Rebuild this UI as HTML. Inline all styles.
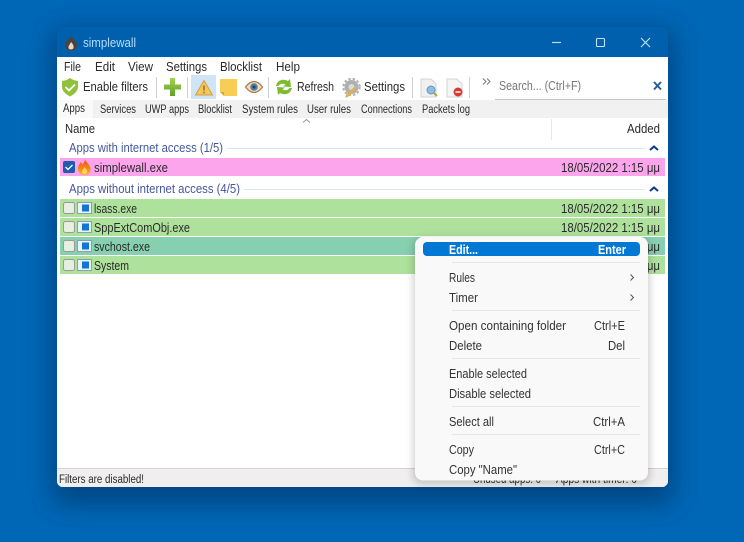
<!DOCTYPE html>
<html><head><meta charset="utf-8"><title>simplewall</title>
<style>
html,body{margin:0;padding:0;width:744px;height:542px;overflow:hidden;background:#0066b5}
svg{display:block}
text{font-family:"Liberation Sans",sans-serif;font-size:12.5px;fill:#2a2a2a}
.t{fill:#2a2a2a}
.g{fill:#44579c}
.m{fill:#333}
.s{font-size:11.5px}
</style></head><body>
<svg width="744" height="542" viewBox="0 0 744 542" xmlns="http://www.w3.org/2000/svg">
<defs>
<filter id="sh" x="-15%" y="-15%" width="130%" height="130%"><feGaussianBlur stdDeviation="13"/></filter>
<filter id="sh2" x="-10%" y="-10%" width="120%" height="120%"><feGaussianBlur stdDeviation="4"/></filter>
<linearGradient id="gr" x1="0" y1="0" x2="0" y2="1"><stop offset="0" stop-color="#a6d34a"/><stop offset="1" stop-color="#5f9e2a"/></linearGradient>
<linearGradient id="fl" x1="0" y1="0" x2="0" y2="1"><stop offset="0" stop-color="#f04a14"/><stop offset="1" stop-color="#ffb020"/></linearGradient>
</defs>
<rect width="744" height="542" fill="#0067b6"/>
<rect x="52" y="30" width="622" height="474" rx="10" fill="#003a72" opacity=".75" filter="url(#sh)"/>
<!-- title bar -->
<path d="M57 57V33a6 6 0 0 1 6-6H662a6 6 0 0 1 6 6V57Z" fill="#0060ae"/>
<path d="M71 35c1 3 5 5 6 9 .5 4-2.500 7-6 7s-6.500-3-6-7c.5-3 3-4 3-6 1 1 1.500 1 2 1 .5-1 1-2 1-4Z" fill="#4a4440"/>
<path d="M71 42c2 2 3 4 2.500 6-.5 2-4.500 2-5 0-.5-2 1.500-3.500 2.500-6Z" fill="#e8d8c8"/>
<text x="83" y="47" textLength="53" lengthAdjust="spacingAndGlyphs" style="fill:#b4defa">simplewall</text>
<path d="M552 42.500H561" stroke="#b4defa" stroke-width="1.200"/>
<rect x="596.500" y="38.500" width="8" height="8" rx="1" fill="none" stroke="#c3e3f8" stroke-width="1.100"/>
<path d="M641 38L650 47M650 38L641 47" stroke="#c3e3f8" stroke-width="1.100"/>
<!-- client -->
<path d="M57 57H668V481a6 6 0 0 1-6 6H63a6 6 0 0 1-6-6Z" fill="#fff"/>
<!-- menu -->
<text class="t" x="64" y="71" textLength="17" lengthAdjust="spacingAndGlyphs">File</text>
<text class="t" x="95" y="71" textLength="20" lengthAdjust="spacingAndGlyphs">Edit</text>
<text class="t" x="128" y="71" textLength="25" lengthAdjust="spacingAndGlyphs">View</text>
<text class="t" x="166" y="71" textLength="41" lengthAdjust="spacingAndGlyphs">Settings</text>
<text class="t" x="220" y="71" textLength="42" lengthAdjust="spacingAndGlyphs">Blocklist</text>
<text class="t" x="276" y="71" textLength="24" lengthAdjust="spacingAndGlyphs">Help</text>
<!-- toolbar -->
<path d="M70 78c3 2 5 2.500 8 3v6c0 4-4 7.500-8 9.500-4-2-8-5.500-8-9.500v-6c3-.5 5-1 8-3Z" fill="#8fc23a"/>
<path d="M65.500 87l3.500 3.500 6-6" fill="none" stroke="#fff" stroke-width="1.800"/>
<text class="t" x="83" y="91" textLength="65" lengthAdjust="spacingAndGlyphs">Enable filters</text>
<path d="M156.500 77V98M187.500 77V98M268.500 77V98M412.500 77V98M469.500 77V98" stroke="#cfcfcf"/>
<path d="M170 78h5v6.500h6v5h-6V96h-5v-6.500h-6v-5h6Z" fill="url(#gr)"/>
<rect x="191" y="75" width="25" height="24" fill="#cfe5f6"/>
<path d="M204 80.500L212.500 95H195.500Z" fill="#f7c65a" stroke="#d0a040"/>
<path d="M204 85.500V90.500M204 91.800V93.200" stroke="#7a5a20" stroke-width="1.200"/>
<path d="M220 79h17v17h-13l-4-4Z" fill="#f8cd55"/>
<path d="M220 92l4 4v-4Z" fill="#dba82e"/>
<path d="M245.500 87c3-4 5.500-5.500 8.500-5.500s5.500 1.500 8.500 5.500c-3 4-5.500 5.500-8.500 5.500s-5.500-1.500-8.500-5.500Z" fill="#f2dcc0" stroke="#b27a48" stroke-width="1.200"/>
<circle cx="254" cy="87" r="3.800" fill="#557f9f"/>
<circle cx="254" cy="87" r="1.500" fill="#24435a"/>
<path d="M276 86c1-5 6-8 12-5l2-2 1 8-8-.5 2.500-2c-3-1.500-6-.5-7 1.500Z" fill="#7fbb2f"/>
<path d="M292 88c-1 5-6 8-12 5l-2 2-1-8 8 .5-2.500 2c3 1.500 6 .5 7-1.500Z" fill="#7fbb2f"/>
<text class="t" x="297" y="91" textLength="37" lengthAdjust="spacingAndGlyphs">Refresh</text>
<circle cx="351.500" cy="87" r="7" fill="#b0b0b0"/>
<circle cx="351.500" cy="87" r="8.200" fill="none" stroke="#b0b0b0" stroke-width="2" stroke-dasharray="2.400 2"/>
<circle cx="351.500" cy="87" r="3" fill="#dcdcdc"/>
<path d="M346 95l8-8 2 2-8 8-3 .5Z" fill="#e2b04a"/>
<text class="t" x="364" y="91" textLength="41" lengthAdjust="spacingAndGlyphs">Settings</text>
<path d="M421 79h10l5 5v13h-15Z" fill="#f0f0f0" stroke="#d4d4d4"/>
<circle cx="431" cy="90" r="4" fill="#8dbde0" stroke="#6a9abd"/>
<path d="M434 93l3 3" stroke="#b5a83a" stroke-width="2"/>
<path d="M447 79h10l5 5v13h-15Z" fill="#f5f5f5" stroke="#d4d4d4"/>
<circle cx="458" cy="92" r="4.500" fill="#d83a36"/>
<path d="M455.500 92h5" stroke="#fff" stroke-width="1.500"/>
<path d="M483 78.500l3 3-3 3M487 78.500l3 3-3 3" fill="none" stroke="#777"/>
<rect x="495" y="76" width="171" height="23" fill="#fff"/>
<path d="M495 99.500H666" stroke="#c4c4c4"/>
<text x="499" y="90" textLength="82" lengthAdjust="spacingAndGlyphs" style="fill:#777">Search... (Ctrl+F)</text>
<path d="M654 82L661 89.500M661 82L654 89.500" stroke="#2b5c92" stroke-width="2"/>
<!-- tabs -->
<rect x="57" y="100" width="611" height="18" fill="#f1f1f1"/>
<rect x="58" y="100" width="35" height="18" fill="#fafafa"/>
<text class="t s" x="63" y="112" textLength="22" lengthAdjust="spacingAndGlyphs">Apps</text>
<text class="t s" x="100" y="113" textLength="36" lengthAdjust="spacingAndGlyphs">Services</text>
<text class="t s" x="145" y="113" textLength="44" lengthAdjust="spacingAndGlyphs">UWP apps</text>
<text class="t s" x="198" y="113" textLength="34" lengthAdjust="spacingAndGlyphs">Blocklist</text>
<text class="t s" x="242" y="113" textLength="56" lengthAdjust="spacingAndGlyphs">System rules</text>
<text class="t s" x="307" y="113" textLength="44" lengthAdjust="spacingAndGlyphs">User rules</text>
<text class="t s" x="361" y="113" textLength="51" lengthAdjust="spacingAndGlyphs">Connections</text>
<text class="t s" x="422" y="113" textLength="48" lengthAdjust="spacingAndGlyphs">Packets log</text>
<!-- header -->
<path d="M303 122.500l3.500-3 3.500 3" fill="none" stroke="#999"/>
<path d="M551.500 119V140" stroke="#e8e8e8"/>
<text class="t" x="65" y="133" textLength="30" lengthAdjust="spacingAndGlyphs">Name</text>
<text class="t" x="627" y="133" textLength="33" lengthAdjust="spacingAndGlyphs">Added</text>
<!-- groups -->
<text class="g" x="69" y="152" textLength="154" lengthAdjust="spacingAndGlyphs">Apps with internet access (1/5)</text>
<path d="M227 148.500H645" stroke="#d6e4ee"/>
<path d="M650 150l4-3.500 4 3.500" fill="none" stroke="#0b3a90" stroke-width="2"/>
<text class="g" x="69" y="193" textLength="171" lengthAdjust="spacingAndGlyphs">Apps without internet access (4/5)</text>
<path d="M244 189.500H645" stroke="#e0e8ee"/>
<path d="M650 191l4-3.500 4 3.500" fill="none" stroke="#0b3a90" stroke-width="2"/>
<!-- rows -->
<rect x="60" y="158" width="605" height="18" fill="#fca5ec"/>
<rect x="63" y="161" width="12" height="12" rx="2" fill="#1d5cae"/>
<path d="M65.500 167l2.500 2.500 4.500-4.500" fill="none" stroke="#fff" stroke-width="1.300"/>
<path d="M85 159c.5 3 5 5.500 5.500 9.500.5 4-2.500 6.500-6 6.500s-6.500-2.500-6.500-6.500c0-3 2-4.500 2.500-6.500 1 1 1.500 2 2 2.500 1-1.500 2.500-3 2.500-5.500Z" fill="url(#fl)"/>
<path d="M84.500 167c1.500 2 3 3.500 2.500 5.500-.5 2-4.500 2-5 0-.3-1.500 1.500-3 2.500-5.500Z" fill="#ffd760"/>
<text class="t" x="94" y="172" textLength="74" lengthAdjust="spacingAndGlyphs">simplewall.exe</text>
<text class="t" x="561" y="172" textLength="99" lengthAdjust="spacingAndGlyphs">18/05/2022 1:15 μμ</text>

<rect x="60" y="199" width="605" height="18" fill="#aee29c"/>
<rect x="60" y="218" width="605" height="18" fill="#aee29c"/>
<rect x="60" y="237" width="605" height="18" fill="#86d0b0"/>
<rect x="60" y="256" width="605" height="18" fill="#aee29c"/>
<g fill="#e6efe0" stroke="#9a9a9a">
<rect x="63.500" y="202.500" width="11" height="11" rx="2"/>
<rect x="63.500" y="221.500" width="11" height="11" rx="2"/>
<rect x="63.500" y="240.500" width="11" height="11" rx="2"/>
<rect x="63.500" y="259.500" width="11" height="11" rx="2"/>
</g>
<g fill="#e8f2fa" stroke="#8aa0b4">
<rect x="77.500" y="202.500" width="14" height="11"/>
<rect x="77.500" y="221.500" width="14" height="11"/>
<rect x="77.500" y="240.500" width="14" height="11"/>
<rect x="77.500" y="259.500" width="14" height="11"/>
</g>
<g fill="#1476d2">
<rect x="82" y="204.500" width="7" height="7"/>
<rect x="82" y="223.500" width="7" height="7"/>
<rect x="82" y="242.500" width="7" height="7"/>
<rect x="82" y="261.500" width="7" height="7"/>
</g>
<text class="t" x="94" y="213" textLength="43" lengthAdjust="spacingAndGlyphs">lsass.exe</text>
<text class="t" x="94" y="232" textLength="96" lengthAdjust="spacingAndGlyphs">SppExtComObj.exe</text>
<text class="t" x="94" y="251" textLength="56" lengthAdjust="spacingAndGlyphs">svchost.exe</text>
<text class="t" x="94" y="270" textLength="35" lengthAdjust="spacingAndGlyphs">System</text>
<text class="t" x="561" y="213" textLength="99" lengthAdjust="spacingAndGlyphs">18/05/2022 1:15 μμ</text>
<text class="t" x="561" y="232" textLength="99" lengthAdjust="spacingAndGlyphs">18/05/2022 1:15 μμ</text>
<text class="t" x="561" y="251" textLength="99" lengthAdjust="spacingAndGlyphs">18/05/2022 1:15 μμ</text>
<text class="t" x="561" y="270" textLength="99" lengthAdjust="spacingAndGlyphs">18/05/2022 1:15 μμ</text>
<!-- status -->
<path d="M57 469H668V481a6 6 0 0 1-6 6H63a6 6 0 0 1-6-6Z" fill="#f0eeee"/>
<path d="M57 468.500H668" stroke="#d4d4d4"/>
<text class="t s" x="59" y="483" textLength="85" lengthAdjust="spacingAndGlyphs">Filters are disabled!</text>
<text class="t s" x="473" y="483" textLength="68" lengthAdjust="spacingAndGlyphs">Unused apps: 0</text>
<text class="t s" x="556" y="483" textLength="81" lengthAdjust="spacingAndGlyphs">Apps with timer: 0</text>
<!-- context menu -->
<rect x="413" y="238" width="237" height="246" rx="9" fill="#000" opacity=".18" filter="url(#sh2)"/>
<rect x="415" y="237" width="233" height="243.500" rx="8" fill="#f9f9f9"/>
<rect x="423" y="242" width="217" height="14" rx="4" fill="#0078d4"/>
<text x="449" y="254" textLength="29" lengthAdjust="spacingAndGlyphs" style="fill:#fff;font-weight:bold">Edit...</text>
<text x="598" y="254" textLength="28" lengthAdjust="spacingAndGlyphs" style="fill:#fff;font-weight:bold">Enter</text>
<g stroke="#e6e6e6">
<path d="M452 262.500H640M452 310.500H640M452 358.500H640M452 406.500H640M452 434.500H640"/>
</g>
<text class="m" x="449" y="282" textLength="26" lengthAdjust="spacingAndGlyphs">Rules</text>
<text class="m" x="449" y="302" textLength="29" lengthAdjust="spacingAndGlyphs">Timer</text>
<path d="M630.500 274.500l3 3-3 3M630.500 294.500l3 3-3 3" fill="none" stroke="#555"/>
<text class="m" x="449" y="330" textLength="117" lengthAdjust="spacingAndGlyphs">Open containing folder</text>
<text class="m" x="594" y="330" textLength="31" lengthAdjust="spacingAndGlyphs">Ctrl+E</text>
<text class="m" x="449" y="350" textLength="33" lengthAdjust="spacingAndGlyphs">Delete</text>
<text class="m" x="608" y="350" textLength="17" lengthAdjust="spacingAndGlyphs">Del</text>
<text class="m" x="449" y="378" textLength="78" lengthAdjust="spacingAndGlyphs">Enable selected</text>
<text class="m" x="449" y="398" textLength="82" lengthAdjust="spacingAndGlyphs">Disable selected</text>
<text class="m" x="449" y="426" textLength="45" lengthAdjust="spacingAndGlyphs">Select all</text>
<text class="m" x="593" y="426" textLength="32" lengthAdjust="spacingAndGlyphs">Ctrl+A</text>
<text class="m" x="449" y="454" textLength="25" lengthAdjust="spacingAndGlyphs">Copy</text>
<text class="m" x="594" y="454" textLength="31" lengthAdjust="spacingAndGlyphs">Ctrl+C</text>
<text class="m" x="449" y="474" textLength="68" lengthAdjust="spacingAndGlyphs">Copy "Name"</text>
</svg>
</body></html>
